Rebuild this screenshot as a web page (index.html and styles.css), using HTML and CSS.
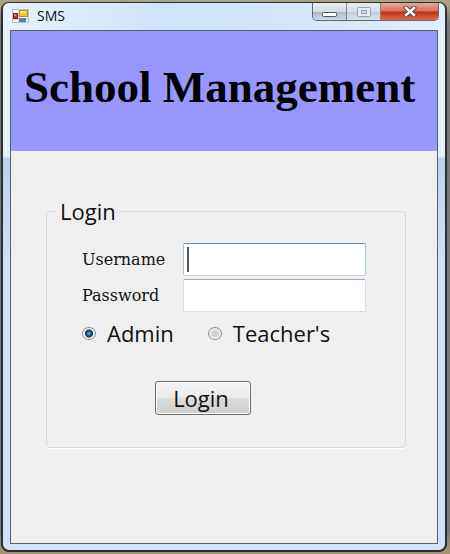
FILE: index.html
```html
<!DOCTYPE html>
<html lang="en">
<head>
    <meta charset="UTF-8">
    <meta name="viewport" content="width=device-width, initial-scale=1.0">
    <title>SMS</title>
    <link rel="stylesheet" href="styles.css">
</head>
<body>
    <div class="window">
        <header class="titlebar">
            <svg class="app-icon" width="17" height="14" viewBox="0 0 17 14">
                <rect x="0.5" y="0.5" width="16" height="13" fill="#f4f8fc" stroke="#b4bfce"/>
                <path d="M7 1v12M1 10h15" stroke="#a9b6c8" fill="none"/>
                <rect x="1.5" y="4.5" width="4" height="5" fill="#c4332b" stroke="#8a1c1c"/>
                <rect x="2" y="5" width="2" height="2" fill="#e07a68"/>
                <rect x="7.5" y="1.5" width="8" height="6" fill="#f6c62c" stroke="#c48f1e"/>
                <path d="M8 2h6v2H8z" fill="#ffe58a"/>
                <rect x="7.5" y="9.5" width="6" height="3" fill="#3f83d8" stroke="#5b86bd"/>
            </svg>
            <span class="title">SMS</span>
            <div class="controls">
                <button type="button" class="minimize" aria-label="Minimize">
                    <svg width="15" height="5" viewBox="0 0 15 5">
                        <rect x="0.5" y="0.5" width="14" height="4" rx="1" fill="#fff" stroke="#4c5560"/>
                    </svg>
                </button>
                <button type="button" class="maximize" aria-label="Maximize" disabled>
                    <svg width="14" height="10" viewBox="0 0 14 10">
                        <rect x="0.5" y="0.5" width="13" height="9" rx="1" fill="#e6ebf0" stroke="#99a4b0"/>
                        <rect x="4.5" y="3.5" width="5" height="3" fill="#d3dae1" stroke="#99a4b0"/>
                    </svg>
                </button>
                <button type="button" class="close" aria-label="Close">
                    <svg width="14" height="11" viewBox="0 0 14 11">
                        <path d="M3 2l8 7M11 2l-8 7" stroke="#5d3d3d" stroke-width="4.4" stroke-linecap="square"/>
                        <path d="M3 2l8 7M11 2l-8 7" stroke="#fff" stroke-width="2.6" stroke-linecap="square"/>
                    </svg>
                </button>
            </div>
        </header>
        <main class="client">
            <h1>School Management</h1>
            <form>
                <fieldset>
                    <legend>Login</legend>
                    <div class="fields">
                        <label for="username">Username</label>
                        <input type="text" id="username" class="active">
                        <label for="password">Password</label>
                        <input type="password" id="password">
                    </div>
                    <div class="roles">
                        <label><input type="radio" name="role" checked>Admin</label>
                        <label><input type="radio" name="role">Teacher's</label>
                    </div>
                    <button type="submit" class="login">Login</button>
                </fieldset>
            </form>
        </main>
    </div>
</body>
</html>
```

FILE: styles.css
```css
*{
    box-sizing: border-box;
}
body{
    margin: 0;
    min-height: 100vh;
    padding: 2px 3px 2px 1px;
    display: flex;
    background: linear-gradient(#a8a282 0, #a8a282 5px, #77787a 24px, #77787a calc(100% - 24px), #a1946c calc(100% - 4px));
    font-family: "Open Sans", "Noto Sans", sans-serif;
    color: #111;
}
.window{
    flex: 1;
    display: flex;
    flex-direction: column;
    padding: 0 7px 6px;
    border: 2px solid #2b2f33;
    border-top-width: 1px;
    border-radius: 8px;
    background: linear-gradient(#e4f0fb 0, #e4f0fb 154px, #bcd3ec 155px, #cfe2f7 260px, #cfe4fa 100%);
}
.titlebar{
    display: flex;
    align-items: flex-start;
    height: 27px;
    margin: 0 -7px;
    padding: 0 6px 0 9px;
    border-radius: 6px 6px 0 0;
    background: linear-gradient(90deg, #e8f2fc, #cfe4fa 35%, #d3e6fa 65%, #e2effc);
}
.app-icon{
    margin-top: 6px;
}
.title{
    flex: 1;
    margin-left: 8px;
    font-size: 14px;
    line-height: 25px;
}
.controls{
    display: flex;
    height: 18px;
    border: 1px solid #5e6a76;
    border-top: 0;
    border-radius: 0 0 5px 5px;
    overflow: hidden;
}
.controls button{
    display: flex;
    align-items: center;
    justify-content: center;
    width: 34px;
    padding: 0;
    border: 0;
    border-right: 1px solid #7b8793;
    background: linear-gradient(#e9eef3 0, #d3dae2 50%, #abb7c3 52%, #cfdae4 100%);
}
.controls .minimize{
    padding-top: 5px;
}
.controls .maximize{
    background: linear-gradient(#e2eaf2 0, #d3dfea 50%, #bfcedc 52%, #d5e3ef 100%);
}
.controls .close{
    width: 57px;
    border-right: 0;
    background: linear-gradient(#eaa898 0, #d9705c 48%, #bd3017 52%, #dc6b45 100%);
}
.client{
    flex: 1;
    border: 1px solid #59636e;
    background: #efefef;
}
h1{
    margin: 0;
    height: 120px;
    padding-left: 13px;
    background: #9896ff;
    color: #000;
    font: bold 45px/112px "Liberation Serif", serif;
    white-space: nowrap;
}
form{
    padding: 47px 31px 32px 35px;
}
fieldset{
    height: 250px;
    margin: 0;
    padding: 19px 39px 32px 35px;
    border: 1px solid #d3d8de;
    border-radius: 4px;
    box-shadow: 0 1px 0 #fff;
}
legend{
    margin-left: -27px;
    padding: 0 5px;
    font-size: 22px;
    line-height: 26px;
}
.fields{
    display: grid;
    grid-template-columns: 101px 1fr;
    row-gap: 3px;
    align-items: center;
}
.fields label{
    font: 16px/20px "DejaVu Serif", serif;
}
.fields input{
    width: 100%;
    height: 33px;
    padding: 2px 6px;
    border: 1px solid #d9dce2;
    border-top-color: #a5a5ad;
    border-radius: 2px;
    background: #fff;
    font: 18px "Open Sans", sans-serif;
    outline: none;
}
.fields .active{
    border-color: #5d8db0 #a5c7de #b5d3e6;
    /* text cursor */
    background: linear-gradient(#555, #555) 3px 3px / 2px 25px no-repeat #fff;
}
.roles{
    display: flex;
    gap: 34px;
    margin-top: 7px;
    font-size: 22px;
    line-height: 28px;
}
.roles label{
    display: flex;
    align-items: center;
    gap: 11px;
}
.roles input{
    appearance: none;
    width: 14px;
    height: 13px;
    margin: 0;
    border: 1px solid #8b8f94;
    border-radius: 50%;
    background: radial-gradient(#d0d3d6 35%, #f6f6f6 65%);
}
.roles input:checked{
    background: radial-gradient(circle at 50% 50%, #7cc4e8 0, #1f5f8c 25%, #123a5c 45%, #f4f4f4 55%);
}
.login{
    display: block;
    width: 96px;
    height: 34px;
    margin: 34px 0 0 73px;
    padding: 0 4px 0 0;
    border: 1px solid #707070;
    border-radius: 3px;
    background: linear-gradient(#f3f3f3 0, #ebebeb 48%, #dddddd 50%, #cfcfcf 100%);
    box-shadow: inset 0 0 0 1px #fbfbfb;
    color: #111;
    font: 22px/28px "Open Sans", sans-serif;
}
```
